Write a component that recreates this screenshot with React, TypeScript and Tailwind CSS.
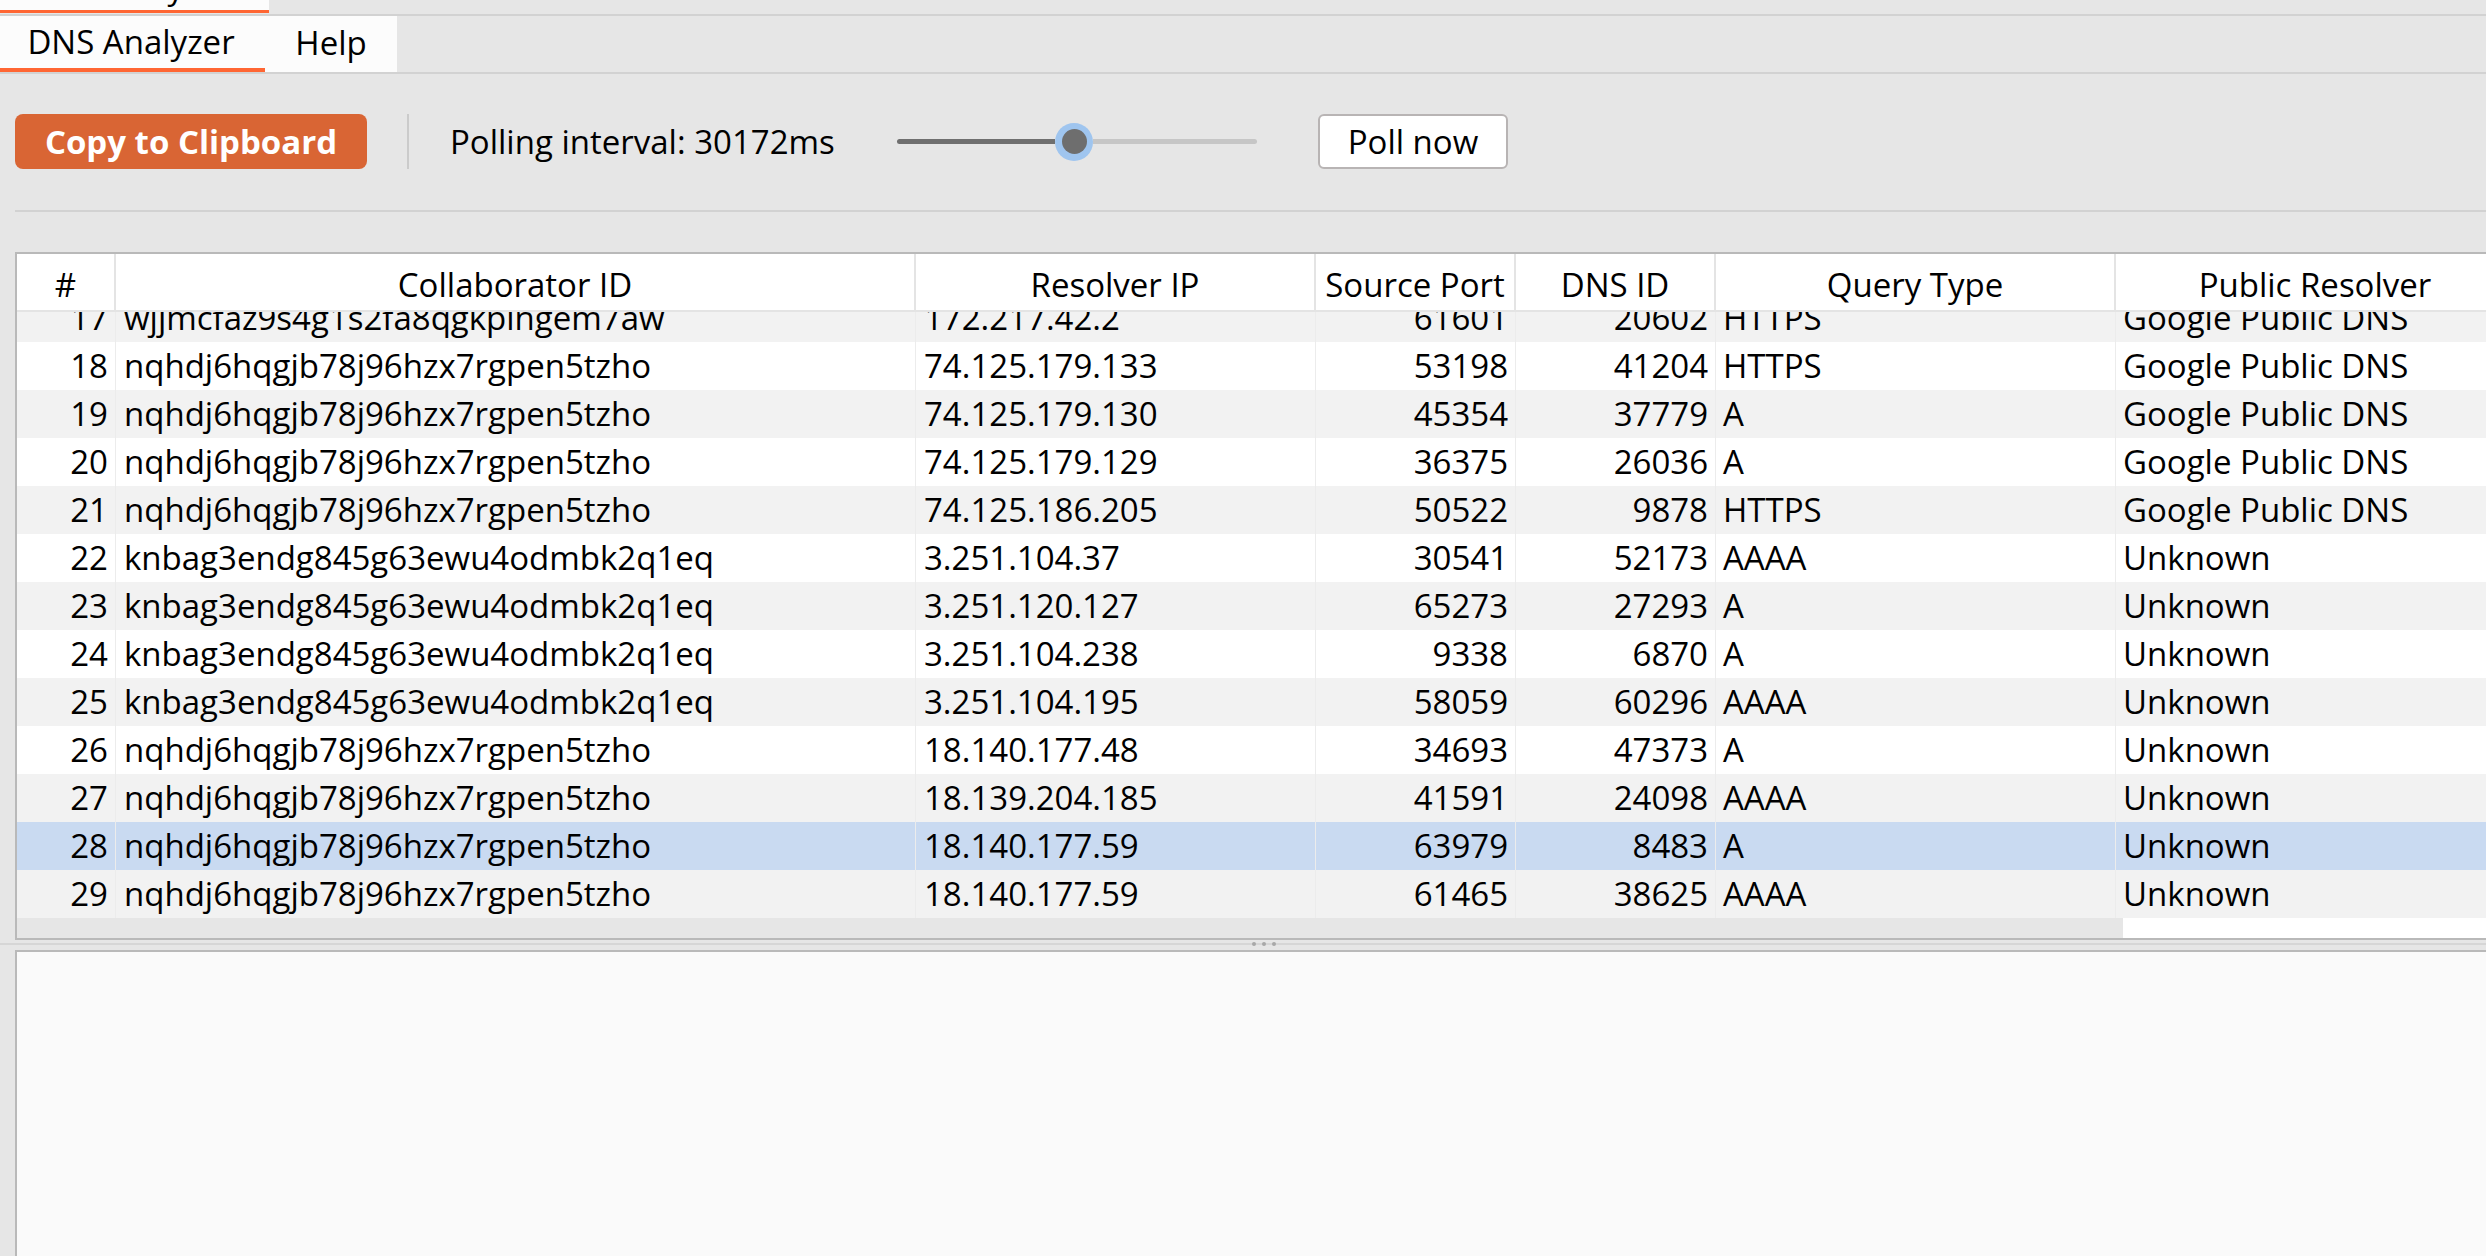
import React from "react";

type Row = [string, string, string, string, string, string, string];

const A = "nqhdj6hqgjb78j96hzx7rgpen5tzho";
const B = "knbag3endg845g63ewu4odmbk2q1eq";

const rows: Row[] = [
  ["17", "wjjmcfaz9s4g1s2fa8qgkpingem7aw", "172.217.42.2", "61601", "20602", "HTTPS", "Google Public DNS"],
  ["18", A, "74.125.179.133", "53198", "41204", "HTTPS", "Google Public DNS"],
  ["19", A, "74.125.179.130", "45354", "37779", "A", "Google Public DNS"],
  ["20", A, "74.125.179.129", "36375", "26036", "A", "Google Public DNS"],
  ["21", A, "74.125.186.205", "50522", "9878", "HTTPS", "Google Public DNS"],
  ["22", B, "3.251.104.37", "30541", "52173", "AAAA", "Unknown"],
  ["23", B, "3.251.120.127", "65273", "27293", "A", "Unknown"],
  ["24", B, "3.251.104.238", "9338", "6870", "A", "Unknown"],
  ["25", B, "3.251.104.195", "58059", "60296", "AAAA", "Unknown"],
  ["26", A, "18.140.177.48", "34693", "47373", "A", "Unknown"],
  ["27", A, "18.139.204.185", "41591", "24098", "AAAA", "Unknown"],
  ["28", A, "18.140.177.59", "63979", "8483", "A", "Unknown"],
  ["29", A, "18.140.177.59", "61465", "38625", "AAAA", "Unknown"],
];

function HeaderCell({ w, children }: { w: string; children: React.ReactNode }) {
  return (
    <div className={`${w} shrink-0 h-full flex items-center justify-center pt-[5px] border-r-2 border-[#e4e4e4] whitespace-nowrap`}>
      {children}
    </div>
  );
}

function TableRow({ r, idx }: { r: Row; idx: number }) {
  const selected = r[0] === "28";
  const odd = parseInt(r[0], 10) % 2 === 1;
  const bg = selected ? "bg-[#c9daf1]" : odd ? "bg-[#f2f2f2]" : "bg-white";
  const cell = "shrink-0 h-full whitespace-nowrap overflow-hidden border-r border-[#ececec]";
  return (
    <div className={`flex h-[48px] leading-[48px] ${bg} ${idx === 0 ? "-mt-[18px]" : ""}`}>
      <div className={`w-[99px] text-right pr-[7px] ${cell}`}>{r[0]}</div>
      <div className={`w-[800px] pl-2 ${cell}`}>{r[1]}</div>
      <div className={`w-[400px] pl-2 ${cell}`}>{r[2]}</div>
      <div className={`w-[200px] text-right pr-[7px] ${cell}`}>{r[3]}</div>
      <div className={`w-[200px] text-right pr-[7px] ${cell}`}>{r[4]}</div>
      <div className={`w-[400px] pl-[7px] ${cell}`}>{r[5]}</div>
      <div className={`w-[400px] pl-[7px] ${cell}`}>{r[6]}</div>
    </div>
  );
}

export default function App() {
  return (
    <div className="w-[2486px] h-[1256px] overflow-hidden bg-[#e6e6e6] flex flex-col font-['Open_Sans','Noto_Sans',sans-serif] text-[33px] text-black">
      {/* top (cut-off) tab row */}
      <div className="h-[14px] flex shrink-0">
        <div className="w-[269px] h-[13px] bg-[#fcfcfc] border-b-[3px] border-[#ff6633] overflow-hidden">
          <div className="pl-[97px] leading-none -mt-[30px]">Proxy</div>
        </div>
      </div>
      <div className="h-[2px] bg-[#d2d2d2] shrink-0" />

      {/* second tab row */}
      <div className="h-[56px] flex shrink-0">
        <div className="w-[265px] h-full bg-[#fcfcfc] border-b-4 border-[#ff6633] flex items-center justify-center pr-[3px]">
          DNS Analyzer
        </div>
        <div className="w-[132px] h-full bg-[#fcfcfc] flex items-center justify-center pb-[2px]">Help</div>
      </div>
      <div className="h-[2px] bg-[#d2d2d2] shrink-0" />

      {/* toolbar */}
      <div className="flex items-center pl-[15px] pt-[40px] pb-[41px] shrink-0">
        <button className="w-[352px] h-[55px] rounded-[8px] bg-[#d96534] text-white font-bold flex items-center justify-center leading-none">
          Copy to Clipboard
        </button>
        <div className="ml-[40px] w-[2px] h-[55px] bg-[#cbcbcb]" />
        <div className="ml-[41px] w-[387px] whitespace-nowrap leading-none">Polling interval: 30172ms</div>
        <div className="ml-[60px] w-[360px] h-[40px] flex items-center">
          <div className="w-[158px] h-[5px] rounded-l-full bg-[#6f6f6f]" />
          <div className="w-[38px] h-[38px] rounded-full bg-[#9fc5ef] flex items-center justify-center shrink-0">
            <div className="w-[25px] h-[25px] rounded-full bg-[#6e6e6e]" />
          </div>
          <div className="flex-1 h-[5px] rounded-r-full bg-[#c6c6c6]" />
        </div>
        <button className="ml-[61px] w-[190px] h-[55px] rounded-[6px] bg-white border-2 border-[#b8b4b4] flex items-center justify-center leading-none">
          Poll now
        </button>
      </div>
      <div className="h-[2px] ml-[15px] bg-[#d2d2d2] shrink-0" />

      {/* table */}
      <div className="mt-[40px] ml-[15px] border-l-2 border-t-2 border-b-2 border-[#b9b9b9] overflow-hidden shrink-0">
        <div className="w-[2499px]">
          <div className="flex h-[58px] bg-white border-b-2 border-[#e4e4e4]">
            <HeaderCell w="w-[99px]">#</HeaderCell>
            <HeaderCell w="w-[800px]">Collaborator ID</HeaderCell>
            <HeaderCell w="w-[400px]">Resolver IP</HeaderCell>
            <HeaderCell w="w-[200px]">Source Port</HeaderCell>
            <HeaderCell w="w-[200px]">DNS ID</HeaderCell>
            <HeaderCell w="w-[400px]">Query Type</HeaderCell>
            <HeaderCell w="w-[400px]">Public Resolver</HeaderCell>
          </div>
          <div className="h-[606px] overflow-hidden bg-white">
            {rows.map((r, i) => (
              <TableRow key={r[0]} r={r} idx={i} />
            ))}
          </div>
          <div className="h-[20px] flex bg-white">
            <div className="w-[2106px] h-full bg-[#e6e6e6]" />
          </div>
        </div>
      </div>

      {/* splitter */}
      <div className="h-[10px] shrink-0 flex flex-col">
        <div className="h-[3px]" />
        <div className="h-[2px] bg-[#d6d6d6] flex pl-[1252px]">
          <div className="flex gap-[6px] -mt-[1px]">
            <div className="w-[4px] h-[4px] rounded-full bg-[#a8a8a8]" />
            <div className="w-[4px] h-[4px] rounded-full bg-[#a8a8a8]" />
            <div className="w-[4px] h-[4px] rounded-full bg-[#a8a8a8]" />
          </div>
        </div>
      </div>

      {/* bottom panel */}
      <div className="flex-1 ml-[15px] border-l-2 border-t-2 border-[#b9b9b9] bg-[#fafafa]" />
    </div>
  );
}
